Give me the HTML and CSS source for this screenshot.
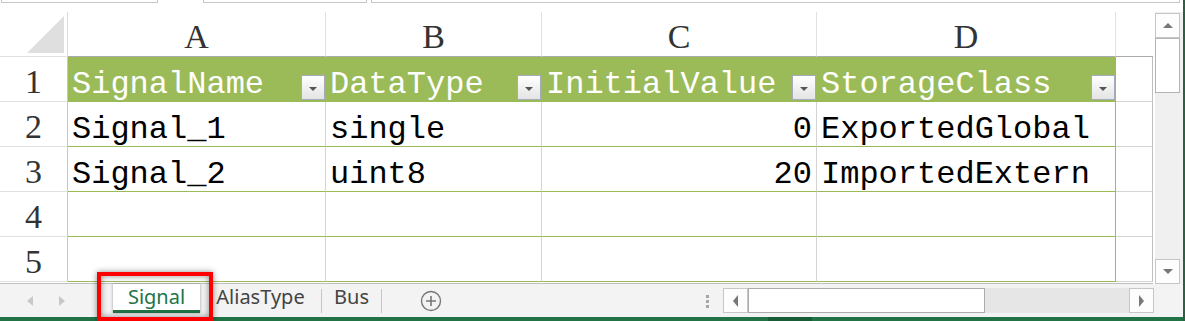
FILE: index.html
```html
<!DOCTYPE html>
<html lang="en">
<head>
  <meta charset="UTF-8" />
  <meta name="viewport" content="width=device-width, initial-scale=1.0" />
  <title>Signal - Excel</title>
  <link rel="stylesheet" href="styles.css">
</head>
<body>
  <div class="window">
    <div class="app">
      <div class="toolbar">
        <div class="box name-box"></div>
        <div class="box fx-box"></div>
        <div class="box formula-box"></div>
      </div>

      <div class="main">
        <div class="sheet">
          <div class="corner"><span class="corner-mark"></span></div>
          <div class="col-head">A</div>
          <div class="col-head">B</div>
          <div class="col-head">C</div>
          <div class="col-head">D</div>
          <div class="col-head col-e"></div>

          <div class="row-head">1</div>
          <div class="cell th"><span>SignalName</span><span class="filter"></span></div>
          <div class="cell th"><span>DataType</span><span class="filter"></span></div>
          <div class="cell th"><span>InitialValue</span><span class="filter"></span></div>
          <div class="cell th last"><span>StorageClass</span><span class="filter"></span></div>
          <div class="cell extra"></div>

          <div class="row-head">2</div>
          <div class="cell td">Signal_1</div>
          <div class="cell td">single</div>
          <div class="cell td num">0</div>
          <div class="cell td last">ExportedGlobal</div>
          <div class="cell extra"></div>

          <div class="row-head">3</div>
          <div class="cell td">Signal_2</div>
          <div class="cell td">uint8</div>
          <div class="cell td num">20</div>
          <div class="cell td last">ImportedExtern</div>
          <div class="cell extra"></div>

          <div class="row-head">4</div>
          <div class="cell td"></div>
          <div class="cell td"></div>
          <div class="cell td num"></div>
          <div class="cell td last"></div>
          <div class="cell extra"></div>

          <div class="row-head">5</div>
          <div class="cell td"></div>
          <div class="cell td"></div>
          <div class="cell td num"></div>
          <div class="cell td last"></div>
          <div class="cell extra"></div>
        </div>

        <div class="vscroll">
          <div class="sbtn"><span class="arrow up"></span></div>
          <div class="thumb-v"></div>
          <div class="sbtn down-btn"><span class="arrow down"></span></div>
        </div>
      </div>

      <div class="tabbar">
        <div class="tab-nav"><span class="nav-left"></span><span class="nav-right"></span></div>
        <div class="tab active">Signal</div>
        <div class="tab alias">AliasType</div>
        <span class="tab-sep"></span>
        <div class="tab bus">Bus</div>
        <span class="tab-sep"></span>
        <svg class="add-sheet" width="22" height="22" viewBox="0 0 22 22">
          <circle cx="11" cy="11" r="9.5" fill="none" stroke="#777" stroke-width="1.4"/>
          <path d="M11 6v10M6 11h10" stroke="#777" stroke-width="1.6"/>
        </svg>
        <div class="split-dots"><i></i><i></i><i></i></div>
        <div class="hscroll">
          <div class="sbtn"><span class="arrow left"></span></div>
          <div class="thumb-h"></div>
          <div class="track"></div>
          <div class="sbtn"><span class="arrow right"></span></div>
        </div>
      </div>

      <div class="statusbar"><span class="status-mark"></span></div>
    </div>
    <div class="edge"></div>
  </div>

  <!-- red highlight around the active sheet tab -->
  <div class="callout"></div>
</body>
</html>
```

FILE: styles.css
```css
* {
  box-sizing: border-box;
}

body {
  margin: 0;
  width: 1185px;
  height: 321px;
  overflow: hidden;
  position: relative;
  background: #fff;
  font-family: "Noto Sans", "Open Sans", sans-serif;
}

.window {
  display: flex;
  height: 321px;
}

.app {
  width: 1183px;
  display: flex;
  flex-direction: column;
}

.edge {
  width: 2px;
  background: #2d5f43;
}

/* top: bottom edges of name box / formula bar */
.toolbar {
  height: 12px;
  display: flex;
}

.box {
  height: 3px;
  border: 1px solid #c6c6c6;
  border-top: none;
}

.name-box {
  margin-left: 1px;
  width: 157px;
}

.fx-box {
  margin-left: 45px;
  width: 164px;
}

.formula-box {
  margin-left: 4px;
  width: 809px;
}

/* grid */
.main {
  display: flex;
  height: 272px;
}

.sheet {
  width: 1153px;
  height: 272px;
  display: grid;
  grid-template-columns: 68px 258px 216px 275px 299px 37px;
  grid-template-rows: repeat(6, 45px);
  align-content: start;
  border-bottom: 1px solid #bfbfbf;
  overflow: hidden;
}

.corner {
  border-right: 1px solid #dadada;
  border-bottom: 1px solid #e1e1e1;
  display: flex;
  justify-content: flex-end;
  align-items: flex-end;
  padding: 0 3px 3px 0;
}

.corner-mark {
  width: 37px;
  height: 37px;
  background: #dfdfdf;
  clip-path: polygon(100% 0, 100% 100%, 0 100%);
}

.col-head,
.row-head {
  font-family: "Liberation Serif", "Times New Roman", serif;
  font-size: 34px;
  line-height: 38px;
  padding-top: 6px;
  text-align: center;
  color: #333;
}

.col-head {
  border-right: 1px solid #e1e1e1;
  border-bottom: 1px solid #ababab;
}

.col-head.col-e {
  border-right: none;
}

.row-head {
  border-right: 1px solid #c6c6c6;
  border-bottom: 1px solid #e1e1e1;
}

.cell {
  font-family: "Liberation Mono", "Courier New", monospace;
  font-size: 32px;
  line-height: 30px;
  padding: 13px 4px 0 4px;
  white-space: nowrap;
  color: #000;
}

.th {
  background: #9bbb59;
  color: #fff;
  border-right: 1px solid #9bbb59;
  border-bottom: 1px solid #9bbb59;
  display: flex;
  justify-content: space-between;
  align-items: flex-start;
  padding-right: 0;
}

.filter {
  align-self: flex-end;
  width: 24px;
  height: 25px;
  margin-bottom: 1px;
  border: 1px solid #a6aabd;
  background: linear-gradient(#ffffff, #e4e4e4);
  display: flex;
  justify-content: center;
  align-items: center;
}

.filter::after {
  content: "";
  border-left: 4px solid transparent;
  border-right: 4px solid transparent;
  border-top: 4px solid #555;
  margin-top: 2px;
}

.td {
  border-right: 1px solid #d4d4d4;
  border-bottom: 1px solid #9bbb59;
}

.td.num {
  text-align: right;
}

.th.last,
.td.last {
  border-right: 1px solid #9bbb59;
}

.extra {
  border-right: 1px solid #bfbfbf;
  border-bottom: 1px solid #d4d4d4;
}

/* scrollbars */
.vscroll {
  margin-left: 2px;
  width: 28px;
  background: #f0f0f0;
  display: flex;
  flex-direction: column;
  padding-top: 1px;
}

.sbtn {
  width: 25px;
  height: 25px;
  border: 1px solid #c6c6c6;
  background: #fdfdfd;
  display: flex;
  justify-content: center;
  align-items: center;
}

.down-btn {
  margin-top: auto;
}

.thumb-v {
  width: 25px;
  height: 55px;
  border: 1px solid #b4b4b4;
  background: #fff;
}

.arrow {
  width: 0;
  height: 0;
}

.arrow.up {
  border-left: 5px solid transparent;
  border-right: 5px solid transparent;
  border-bottom: 5px solid #777;
}

.arrow.down {
  border-left: 5px solid transparent;
  border-right: 5px solid transparent;
  border-top: 5px solid #777;
}

.arrow.left {
  border-top: 6px solid transparent;
  border-bottom: 6px solid transparent;
  border-right: 5px solid #777;
}

.arrow.right {
  border-top: 6px solid transparent;
  border-bottom: 6px solid transparent;
  border-left: 5px solid #777;
}

/* sheet tabs */
.tabbar {
  height: 33px;
  background: #f3f3f3;
  display: flex;
  align-items: flex-start;
}

.tab-nav {
  width: 113px;
  height: 33px;
  display: flex;
  align-items: center;
  padding-left: 27px;
  gap: 26px;
}

.nav-left {
  border-top: 5px solid transparent;
  border-bottom: 5px solid transparent;
  border-right: 6px solid #c8c8c8;
}

.nav-right {
  border-top: 5px solid transparent;
  border-bottom: 5px solid transparent;
  border-left: 6px solid #c8c8c8;
}

.tab {
  height: 29px;
  font-size: 20px;
  line-height: 25px;
  text-align: center;
  color: #444;
}

.tab.active {
  width: 87px;
  background: #fff;
  color: #217346;
  border-bottom: 3px solid #217346;
  box-shadow: 1px 0 2px rgba(0, 0, 0, 0.18), -1px 0 2px rgba(0, 0, 0, 0.18);
}

.tab.alias {
  width: 121px;
}

.tab.bus {
  width: 59px;
}

.tab-sep {
  width: 1px;
  height: 24px;
  margin-top: 5px;
  background: #c6c6c6;
}

.add-sheet {
  margin: 6px 0 0 38px;
}

.split-dots {
  margin: 11px 0 0 auto;
  display: flex;
  flex-direction: column;
  gap: 2px;
}

.split-dots i {
  width: 3px;
  height: 3px;
  background: #a6a6a6;
}

.hscroll {
  margin: 4px 29px 0 14px;
  width: 431px;
  height: 25px;
  display: flex;
}

.thumb-h {
  width: 237px;
  height: 25px;
  border: 1px solid #ababab;
  background: #fff;
}

.track {
  flex: 1;
  background: #e6e6e6;
}

.statusbar {
  height: 4px;
  background: #217346;
  display: flex;
}

.status-mark {
  margin-left: 768px;
  width: 44px;
  background: #185c37;
}

/* annotation overlay */
.callout {
  position: absolute;
  left: 97px;
  top: 272px;
  width: 116px;
  height: 49px;
  border: 4px solid #ff0000;
  box-shadow: 0 0 6px rgba(0, 0, 0, 0.45), inset 0 0 6px rgba(0, 0, 0, 0.45);
}
```
